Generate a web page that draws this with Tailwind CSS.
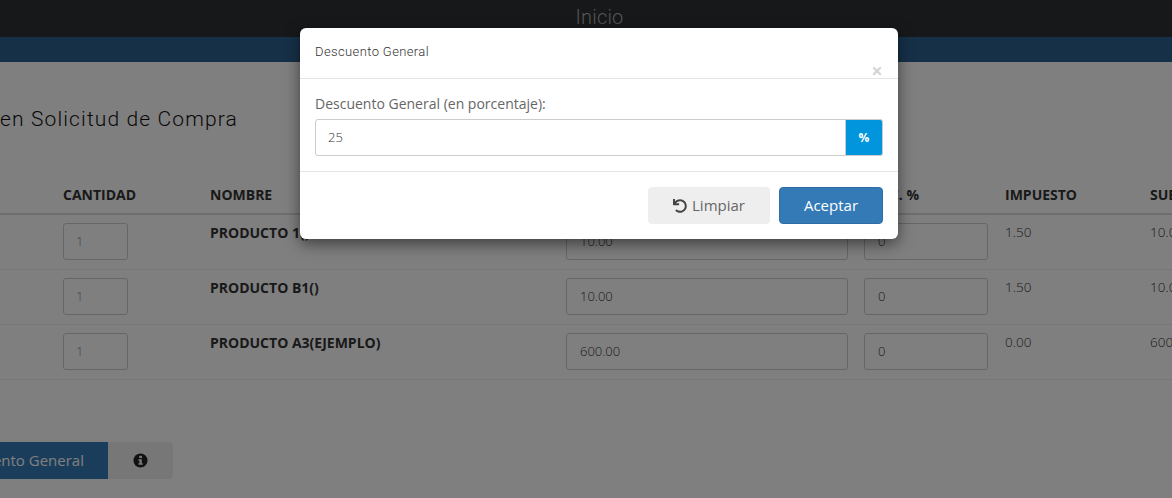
<!DOCTYPE html>
<html lang="es">
<head>
<meta charset="utf-8">
<title>Descuento General</title>
<script src="https://cdn.jsdelivr.net/npm/@tailwindcss/browser@4"></script>
</head>
<body class="font-['Open_Sans',sans-serif]">
<div class="relative w-[1172px] h-[498px] overflow-hidden bg-white text-[#333]">
  <header class="h-[37px] bg-[#2e3033] flex justify-center items-center font-['Roboto',sans-serif] text-[20px] font-light tracking-[0.2px] text-[#aaa] pl-[27px] pb-[3px]">Inicio</header>
  <div class="h-[25px] bg-[#2c6090]"></div>
  <h1 class="mt-[43px] h-[28px] font-['Roboto',sans-serif] text-[21px] leading-[28px] tracking-[1.13px] font-light text-[#111] whitespace-nowrap">en Solicitud de Compra</h1>

  <div class="mt-[52px] grid grid-cols-[63px_147px_356px_298px_141px_145px_1fr] h-[30px] items-start border-b-2 border-[#ddd] text-[14px] font-bold leading-[20px] whitespace-nowrap overflow-hidden text-[#333]">
    <span></span><span>CANTIDAD</span><span>NOMBRE</span><span>PRECIO</span><span>DESC. %</span><span>IMPUESTO</span><span>SUBTOTAL</span>
  </div>
  <div class="grid grid-cols-[63px_147px_356px_298px_141px_145px_1fr] h-[55px] pt-[8px] border-b border-[#eee] text-[14px] leading-[20px] overflow-hidden whitespace-nowrap">
    <span></span>
    <div class="w-[65px] h-[37px] border border-[#ccc] rounded-[3px] pl-[12px] leading-[35px] text-[#7a8a99] text-[13px] font-light">1</div>
    <b class="text-[14px]">PRODUCTO 1()</b>
    <div class="w-[282px] h-[37px] border border-[#ccc] rounded-[3px] pl-[13px] leading-[35px] text-[13px] font-light text-[#333]">10.00</div>
    <div class="w-[124px] h-[37px] border border-[#ccc] rounded-[3px] pl-[13px] leading-[35px] text-[13px] font-light text-[#333]">0</div>
    <span class="text-[13.5px] font-light text-[#333] -mt-[1px]">1.50</span>
    <span class="text-[13.5px] font-light text-[#333] -mt-[1px]">10.00</span>
  </div>
  <div class="grid grid-cols-[63px_147px_356px_298px_141px_145px_1fr] h-[55px] pt-[8px] border-b border-[#eee] text-[14px] leading-[20px] overflow-hidden whitespace-nowrap">
    <span></span>
    <div class="w-[65px] h-[37px] border border-[#ccc] rounded-[3px] pl-[12px] leading-[35px] text-[#7a8a99] text-[13px] font-light">1</div>
    <b class="text-[14px]">PRODUCTO B1()</b>
    <div class="w-[282px] h-[37px] border border-[#ccc] rounded-[3px] pl-[13px] leading-[35px] text-[13px] font-light text-[#333]">10.00</div>
    <div class="w-[124px] h-[37px] border border-[#ccc] rounded-[3px] pl-[13px] leading-[35px] text-[13px] font-light text-[#333]">0</div>
    <span class="text-[13.5px] font-light text-[#333] -mt-[1px]">1.50</span>
    <span class="text-[13.5px] font-light text-[#333] -mt-[1px]">10.00</span>
  </div>
  <div class="grid grid-cols-[63px_147px_356px_298px_141px_145px_1fr] h-[55px] pt-[8px] border-b border-[#eee] text-[14px] leading-[20px] overflow-hidden whitespace-nowrap">
    <span></span>
    <div class="w-[65px] h-[37px] border border-[#ccc] rounded-[3px] pl-[12px] leading-[35px] text-[#7a8a99] text-[13px] font-light">1</div>
    <b class="text-[14px]">PRODUCTO A3(EJEMPLO)</b>
    <div class="w-[282px] h-[37px] border border-[#ccc] rounded-[3px] pl-[13px] leading-[35px] text-[13px] font-light text-[#333]">600.00</div>
    <div class="w-[124px] h-[37px] border border-[#ccc] rounded-[3px] pl-[13px] leading-[35px] text-[13px] font-light text-[#333]">0</div>
    <span class="text-[13.5px] font-light text-[#333] -mt-[1px]">0.00</span>
    <span class="text-[13.5px] font-light text-[#333] -mt-[1px]">600.00</span>
  </div>

  <div class="mt-[62px] flex h-[37px] w-[173px]">
    <div class="w-[108px] bg-[#337ab7] text-white text-[15px] flex justify-end items-center pr-[24px] whitespace-nowrap overflow-hidden">Descuento General</div>
    <div class="w-[65px] bg-[#eee] rounded-r-[4px] flex items-center justify-center">
      <svg viewBox="0 0 16 16" class="w-[15px] h-[15px]"><circle cx="8" cy="8" r="7.5" fill="#222"/><rect x="6.6" y="3" width="3" height="2.4" fill="#eee"/><path d="M5.8 6.6h3.6v4.4h1v1.6H5.8V11h1V8.2h-1z" fill="#eee"/></svg>
    </div>
  </div>

  <div class="absolute inset-0 bg-black/50"></div>

  <div class="absolute left-[300px] top-[28px] w-[598px] h-[211px] bg-white rounded-[6px] shadow-[0_5px_15px_rgba(0,0,0,0.5)]">
    <div class="relative h-[51px] border-b border-[#e5e5e5] pl-[15px] pt-[15px] font-['Roboto',sans-serif] text-[13px] leading-[18px] tracking-[0.38px] font-light text-[#333]">
      Descuento General
      <span class="absolute right-[15px] top-[33px] font-['Open_Sans',sans-serif] text-[20px] leading-[20px] font-bold text-[#d4d4d4]">×</span>
    </div>
    <div class="h-[93px] border-b border-[#e5e5e5] px-[15px] pt-[15px]">
      <div class="text-[14px] leading-[20px] text-[#666]">Descuento General (en porcentaje):</div>
      <div class="flex mt-[5px] h-[37px] w-[568px]">
        <div class="flex-1 border border-[#ccc] rounded-l-[3px] pl-[12px] leading-[35px] text-[13px] font-light text-[#333]">25</div>
        <div class="w-[37px] bg-[#0095dd] border border-[#ccc] border-l-0 rounded-r-[3px] text-white font-bold text-[12px] flex items-center justify-center">%</div>
      </div>
    </div>
    <div class="flex justify-end items-start gap-[9px] px-[15px] pt-[15px]">
      <div class="w-[122px] h-[37px] bg-[#eee] rounded-[4px] flex items-center justify-center gap-[5px] text-[15px] text-[#666]">
        <svg viewBox="0 0 512 512" class="w-[14px] h-[14px]" fill="#444"><path d="M212.333 224.333H12c-6.627 0-12-5.373-12-12V12C0 5.373 5.373 0 12 0h48c6.627 0 12 5.373 12 12v78.112C117.773 39.279 184.26 7.47 258.175 8.007c136.906.994 246.448 111.623 246.157 248.532C504.041 393.258 393.12 504 256.333 504c-64.089 0-122.496-24.313-166.51-64.215-5.099-4.622-5.334-12.554-.467-17.42l33.967-33.967c4.474-4.474 11.662-4.717 16.401-.525C170.76 415.336 211.58 432 256.333 432c97.268 0 176-78.716 176-176 0-97.267-78.716-176-176-176-58.496 0-110.28 28.476-142.274 72.333h98.274c6.627 0 12 5.373 12 12v48c0 6.627-5.373 12-12 12z"/></svg>
        Limpiar
      </div>
      <div class="w-[104px] h-[37px] bg-[#337ab7] border border-[#2e6da4] rounded-[4px] flex items-center justify-center text-[15px] text-white">Aceptar</div>
    </div>
  </div>
</div>
</body>
</html>
